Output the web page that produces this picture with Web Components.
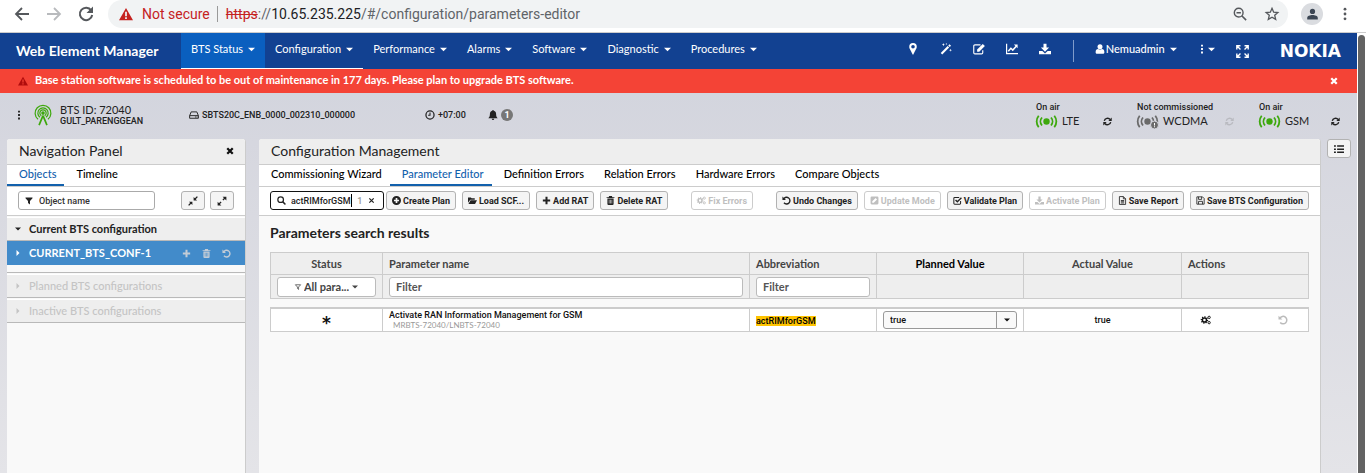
<!DOCTYPE html>
<html lang="en">
<head>
<meta charset="utf-8">
<title>Web Element Manager</title>
<style>
    html, body {
        margin: 0;
        height: 100%;
    }
    body {
        font-family: Lato, Roboto, sans-serif;
        font-size: 11px;
        line-height: 14px;
        color: #222;
        background: #fff;
        --blue: #124191;
        --link: #1261ad;
        --line: #ccc;
        --head: #eee;
        --small: 500 9px/12px Roboto, sans-serif;
    }
</style>
</head>
<body>
<wem-app></wem-app>

<script>
// Base class: opens a shadow root and fills it from the static parts of the class
class WemElement extends HTMLElement {
    constructor() {
        super();
        this.attachShadow({mode: "open"});
        let template = document.createElement('template');
        template.innerHTML = `
            <style>
                * { box-sizing: border-box; }
                button, input, select {
                    font: inherit;
                    color: inherit;
                    background: none;
                    border: 0;
                    padding: 0;
                    margin: 0;
                    outline: 0;
                }
                select { appearance: none; }
                a { color: inherit; text-decoration: none; }
                ${this.constructor.styles}
            </style>
            ${this.constructor.markup}
        `;
        this.shadowRoot.appendChild(template.content.cloneNode(true));
    }
}

const stroke = 'fill="none" stroke="currentColor"';

const icons = {
    'arrow-left': `<path ${stroke} stroke-width="1.8" d="M15 8H2M8 2L2 8l6 6"/>`,
    'arrow-right': `<path ${stroke} stroke-width="1.8" d="M1 8h13M8 2l6 6-6 6"/>`,
    'reload': `<path ${stroke} stroke-width="2" d="M13.2 4.4A6.2 6.2 0 1 0 14.2 9"/><path d="M15 0.5v6.5H8.5z"/>`,
    'warning': `<path fill-rule="evenodd" d="M8 1l8 14H0zM7 5.5v5h2v-5zM7 11.7v2h2v-2z"/>`,
    'zoom-out': `<circle ${stroke} stroke-width="1.6" cx="6.5" cy="6.5" r="5"/><path ${stroke} stroke-width="1.8" d="M10 10l5 5M4 6.5h5"/>`,
    'star': `<path ${stroke} stroke-width="1.5" d="M8 1.5l1.9 4.4 4.8.4-3.6 3.2 1.1 4.7L8 11.7l-4.2 2.5 1.1-4.7L1.3 6.3l4.8-.4z"/>`,
    'person': `<circle cx="8" cy="4.2" r="3.2"/><path d="M1.5 14v-2c0-2.3 3.5-3.5 6.5-3.5s6.5 1.2 6.5 3.5v2z"/>`,
    'dots': `<path d="M6.5 1h3v3h-3zM6.5 6.5h3v3h-3zM6.5 12h3v3h-3z"/>`,
    'round-dots': `<circle cx="8" cy="2.5" r="1.6"/><circle cx="8" cy="8" r="1.6"/><circle cx="8" cy="13.5" r="1.6"/>`,
    'caret-down': `<path d="M0 4h16L8 12z"/>`,
    'caret-right': `<path d="M4 0v16L12 8z"/>`,
    'pin': `<path fill-rule="evenodd" d="M8 0a5 5 0 0 1 5 5c0 2-.7 2.7-5 11C3.7 7.7 3 7 3 5a5 5 0 0 1 5-5zm0 2.6a2.4 2.4 0 1 0 0 4.8 2.4 2.4 0 0 0 0-4.8z"/>`,
    'wand': `<path d="M1 13.2L10.2 4l2 2L3 15.2zM11 3.3l1.7-1.7 2 2L13 5.3zM4.5 0l.6 1.5 1.5.6-1.5.6-.6 1.5-.6-1.5-1.5-.6 1.5-.6zM8.5 0l.4 1 1 .4-1 .4-.4 1-.4-1-1-.4 1-.4zM14 7.5l.5 1.5 1.5.5-1.5.5-.5 1.5-.5-1.5-1.5-.5L13.5 9z"/>`,
    'edit': `<path ${stroke} stroke-width="1.5" d="M13 9.5V13a1.5 1.5 0 0 1-1.5 1.5h-9A1.5 1.5 0 0 1 1 13V4a1.5 1.5 0 0 1 1.5-1.5H10"/><path d="M5.5 11.5V8.7L13 1.2 15.8 4l-7.5 7.5z"/>`,
    'edit-square': `<path fill-rule="evenodd" d="M3 1h10a2 2 0 0 1 2 2v10a2 2 0 0 1-2 2H3a2 2 0 0 1-2-2V3a2 2 0 0 1 2-2zm1 11h2.7L12.5 6 10 3.5 4 9.3z"/>`,
    'chart': `<path d="M0 1h1.6v12.4H16V15H0z"/><path ${stroke} stroke-width="2" d="M3 11l3.5-4L9 9.5 14 4"/><path d="M10.5 2h5v5z"/>`,
    'download': `<path d="M6 1h4v5h3.500L8 11.500 2.500 6H6zM0 10.500h4.500L8 14l3.500-3.500H16V15H0z"/>`,
    'user': `<circle cx="8" cy="4.500" r="4"/><path d="M1 13c0-3.500 1.500-5 4-5 2 1.300 4 1.300 6 0 2.500 0 4 1.500 4 5 0 1.500-1 2.500-2.500 2.500h-9C2 15.500 1 14.500 1 13z"/>`,
    'expand': `<path ${stroke} stroke-width="1.700" d="M1 5.500V1h4.500M10.500 1H15v4.500M15 10.500V15h-4.500M5.500 15H1v-4.500M1 1l4.500 4.500M15 1l-4.500 4.500M15 15l-4.500-4.500M1 15l4.500-4.500"/>`,
    'close': `<path ${stroke} stroke-width="4.500" d="M2.500 2.500l11 11M13.500 2.500l-11 11"/>`,
    'close-thin': `<path ${stroke} stroke-width="2.800" d="M3 3l10 10M13 3L3 13"/>`,
    'antenna': `<circle cx="8" cy="6.300" r="1.600"/><path ${stroke} stroke-width="1.100" d="M3.600 11.800a7 7 0 1 1 8.800 0M5.300 10a4.600 4.600 0 1 1 5.400 0M6.500 8.600a2.800 2.800 0 1 1 3 0"/><path ${stroke} stroke-width="1.500" d="M8 8.500L4.500 17M8 8.500L11.500 17"/>`,
    'disk': `<path ${stroke} stroke-width="1.500" d="M1 9l2.500-6h9L15 9v4.200H1zM1 9h14"/><path d="M9.500 10.500H11V12H9.500zM12 10.500h1.500V12H12z"/>`,
    'clock': `<circle ${stroke} stroke-width="2" cx="8" cy="8" r="6.500"/><path ${stroke} stroke-width="1.700" d="M8 4v4.500H5"/>`,
    'bell': `<path d="M8 0a1.200 1.200 0 0 1 1.200 1.300C12 2 13 4 13 7c0 3 1 4.500 2.500 6H.5C2 11.500 3 10 3 7c0-3 1-5 3.800-5.700A1.200 1.200 0 0 1 8 0zM6 13.800h4a2 2 0 0 1-4 0z"/>`,
    'refresh': `<path ${stroke} stroke-width="2.400" d="M2.300 7A5.900 5.900 0 0 1 12.800 4.500M13.700 9A5.900 5.900 0 0 1 3.200 11.500"/><path d="M15.500 1v6h-6zM.5 15V9h6z"/>`,
    'filter': `<path d="M1 1h14v1.500L10 8v7l-4-3V8L1 2.500z"/>`,
    'filter-line': `<path ${stroke} stroke-width="2" d="M1 2h14L9.500 8v6.500L6.500 12V8z"/>`,
    'compress': `<path d="M9 1.500v5.500h5.500zM7 14.500V9H1.500z"/><path ${stroke} stroke-width="2.200" d="M10.500 5.500L15 1M5.500 10.500L1 15"/>`,
    'enlarge': `<path d="M15 1v6L9 1zM1 15V9l6 6z"/><path ${stroke} stroke-width="2.200" d="M9.500 6.500L13 3M6.500 9.500L3 13"/>`,
    'plus': `<path d="M6.200 1.500h3.600v4.700h4.700v3.600H9.800v4.700H6.200V9.800H1.500V6.200h4.700z"/>`,
    'plus-circle': `<path fill-rule="evenodd" d="M8 0a8 8 0 1 1 0 16A8 8 0 0 1 8 0zM6.500 3.500v3h-3v3h3v3h3v-3h3v-3h-3v-3z"/>`,
    'trash': `<path fill-rule="evenodd" d="M5.500 0h5l.8 2H15v1.500H1V2h3.700zM2.500 4.500h11V14a2 2 0 0 1-2 2h-7a2 2 0 0 1-2-2zM5 6.500v7h1v-7zm2.500 0v7h1v-7zm2.500 0v7h1v-7z"/>`,
    'undo': `<path ${stroke} stroke-width="2.400" d="M3 5A6 6 0 1 1 3.500 12"/><path d="M.8 1v6.200H7z"/>`,
    'search': `<circle ${stroke} stroke-width="2.200" cx="6.500" cy="6.500" r="5"/><path ${stroke} stroke-width="2.600" d="M10 10l5 5"/>`,
    'folder': `<path d="M0 12V2.500h5L6.500 4H12v2.500H4zM4.500 7.500H16L12.500 14H.8z"/>`,
    'gears': `<circle ${stroke} stroke-width="2.400" cx="5.500" cy="8" r="3.300"/><path ${stroke} stroke-width="2" stroke-dasharray="1.900 1.900" d="M5.500 3a5 5 0 1 1 0 10 5 5 0 0 1 0-10z"/><circle ${stroke} stroke-width="1.500" cx="13" cy="3.800" r="1.900"/><circle ${stroke} stroke-width="1.500" cx="13" cy="12.200" r="1.900"/>`,
    'check-square': `<path ${stroke} stroke-width="1.800" d="M13.500 9v4a1.500 1.500 0 0 1-1.500 1.500H3A1.500 1.500 0 0 1 1.500 13V4A1.500 1.500 0 0 1 3 2.500h8"/><path ${stroke} stroke-width="2.400" d="M4.500 7l3.200 3.200L15 3"/>`,
    'document': `<path ${stroke} stroke-width="1.500" d="M2.500 1H9.500l4 4v10h-11zM9.500 1v4h4M5 8h6M5 10.200h6M5 12.400h6"/>`,
    'floppy': `<path ${stroke} stroke-width="1.500" d="M1.500 1.500h10l3 3v10h-13zM4.500 14.500v-5h7v5M4.500 1.500V6H10V1.500"/>`,
    'list': `<path d="M0 2h3v2.400H0zM5 2h11v2.400H5zM0 7h3v2.400H0zM5 7h11v2.400H5zM0 12h3v2.400H0zM5 12h11v2.400H5z"/>`
};

// <wem-icon name="plus"> is one em square and takes the text colour
class WemIcon extends WemElement {
    static styles = `
        :host { display: inline-flex; flex: none; width: 1em; height: 1em; }
        svg { width: 100%; height: 100%; fill: currentColor; overflow: visible; }
    `;
    static markup = `<svg viewBox="0 0 16 16" aria-hidden="true"></svg>`;

    static get observedAttributes() {
        return ['name'];
    }

    attributeChangedCallback() {
        this.shadowRoot.querySelector('svg').innerHTML = icons[this.getAttribute('name')];
    }
}
customElements.define('wem-icon', WemIcon);

// Radio signal: green when on air, grey with a badge when not commissioned
class SignalIcon extends WemElement {
    static styles = `
        :host { display: inline-flex; flex: none; color: #3da80d; }
        :host([off]) { color: #6a6a6a; }
        svg { width: 21px; height: 13px; overflow: visible; }
        .badge { display: none; }
        :host([off]) .badge { display: block; }
    `;
    static markup = `
        <svg viewBox="0 0 21 13" aria-hidden="true">
            <circle cx="10.500" cy="6.500" r="3.200" fill="currentColor"/>
            <path ${stroke} stroke-width="1.800" d="M6 2.500a6 6 0 0 0 0 8M15 2.500a6 6 0 0 1 0 8M2.700.8a9 9 0 0 0 0 11.400M18.300.8a9 9 0 0 1 0 11.400"/>
            <g class="badge">
                <circle cx="17.500" cy="10" r="4" fill="currentColor" stroke="#d6d7df"/>
                <path d="M17 8h1v2.500h-1zM17 11.200h1v1h-1z" fill="#fff"/>
            </g>
        </svg>
    `;
}
customElements.define('signal-icon', SignalIcon);

class BrowserBar extends WemElement {
    static styles = `
        :host {
            display: flex;
            align-items: flex-start;
            height: 33px;
            padding: 0 14px;
            border-bottom: 1px solid #ccc;
            font-family: Roboto, sans-serif;
            font-size: 14px;
            line-height: 28px;
            color: #55585c;
            box-sizing: border-box;
        }
        button { display: flex; align-items: center; height: 28px; margin-right: 16px; font-size: 16px; }
        button[disabled] { color: #b8babd; }
        .address {
            flex: 1;
            display: flex;
            align-items: center;
            height: 28px;
            margin-left: -2px;
            padding: 0 9px 0 11px;
            background: #f1f3f4;
            border-radius: 14px;
        }
        .warn { color: #c5221f; }
        .warn wem-icon { margin-right: 9px; vertical-align: -2px; }
        .sep { width: 1px; height: 16px; margin: 0 8px 0 7px; background: #999; }
        .url { flex: 1; color: #5f6368; }
        .url s { color: #c5221f; }
        .url b { color: #202124; font-weight: 400; }
        .address button { margin: 0 0 0 18px; font-size: 14px; }
        button.avatar { justify-content: center; width: 22px; height: 22px; margin: 3px 15px 0 13px; border-radius: 50%; background: #dadce0; color: #3c4654; font-size: 13px; }
        button.more { margin: 0; font-size: 14px; }
    `;
    static markup = `
        <button aria-label="Back"><wem-icon name="arrow-left"></wem-icon></button>
        <button aria-label="Forward" disabled><wem-icon name="arrow-right"></wem-icon></button>
        <button aria-label="Reload"><wem-icon name="reload"></wem-icon></button>
        <div class="address">
            <span class="warn"><wem-icon name="warning"></wem-icon>Not secure</span>
            <span class="sep"></span>
            <span class="url"><s>https</s>://<b>10.65.235.225</b>/#/configuration/parameters-editor</span>
            <button aria-label="Zoom"><wem-icon name="zoom-out"></wem-icon></button>
            <button aria-label="Bookmark"><wem-icon name="star"></wem-icon></button>
        </div>
        <button class="avatar" aria-label="Profile"><wem-icon name="person"></wem-icon></button>
        <button class="more" aria-label="More"><wem-icon name="round-dots"></wem-icon></button>
    `;
}
customElements.define('browser-bar', BrowserBar);

class NavMenu extends WemElement {
    static styles = `
        :host { display: flex; border-bottom: 1px solid transparent; }
        :host([open]) { border-color: #fff; }
        :host([active]) { background: #0a5fbf; }
        a { display: flex; align-items: center; gap: 5px; padding: 0 10px 3px; }
        wem-icon { font-size: 7px; }
    `;
    static markup = `<a href="#"><slot></slot><wem-icon name="caret-down"></wem-icon></a>`;
}
customElements.define('nav-menu', NavMenu);

class TopNav extends WemElement {
    static styles = `
        :host { display: flex; height: 36px; padding: 0 16px; background: var(--blue); color: #fff; }
        h1 { margin: 0; width: 165px; font-size: 14px; line-height: 36px; font-weight: 700; }
        nav { display: flex; flex: 1; }
        .tools { display: flex; align-items: center; gap: 21px; padding-bottom: 4px; font-size: 12px; }
        .tools a { display: flex; }
        .sep { width: 1px; height: 22px; margin: 0 0 0 22px; background: #7f9bcb; align-self: center; }
        .user { display: flex; align-items: stretch; font-weight: 500; }
        .user .me { margin-left: 11px; }
        .user wem-icon { font-size: 10px; margin-right: -4px; }
        .full { display: flex; align-items: center; margin: 0 31px 0 11px; font-size: 13px; }
        .logo { font: 700 17px/36px "DejaVu Sans", sans-serif; }
    `;
    static markup = `
        <h1>Web Element Manager</h1>
        <nav>
            <nav-menu active open>BTS Status</nav-menu>
            <nav-menu open>Configuration</nav-menu>
            <nav-menu>Performance</nav-menu>
            <nav-menu>Alarms</nav-menu>
            <nav-menu>Software</nav-menu>
            <nav-menu>Diagnostic</nav-menu>
            <nav-menu>Procedures</nav-menu>
        </nav>
        <div class="tools">
            <a href="#" aria-label="Site"><wem-icon name="pin"></wem-icon></a>
            <a href="#" aria-label="Wizard"><wem-icon name="wand"></wem-icon></a>
            <a href="#" aria-label="Edit"><wem-icon name="edit"></wem-icon></a>
            <a href="#" aria-label="Charts"><wem-icon name="chart"></wem-icon></a>
            <a href="#" aria-label="Download"><wem-icon name="download"></wem-icon></a>
        </div>
        <span class="sep"></span>
        <div class="user">
            <nav-menu class="me"><wem-icon name="user"></wem-icon>Nemuadmin</nav-menu>
            <nav-menu aria-label="More"><wem-icon name="dots"></wem-icon></nav-menu>
        </div>
        <a class="full" href="#" aria-label="Full screen"><wem-icon name="expand"></wem-icon></a>
        <span class="logo">NOKIA</span>
    `;
}
customElements.define('top-nav', TopNav);

class AlertBanner extends WemElement {
    static styles = `
        :host { display: flex; align-items: center; gap: 7px; height: 24px; padding: 0 19px 0 18px; background: #f44336; color: #fff; font-weight: 700; }
        wem-icon { font-size: 10px; color: #b00c0c; }
        .text { flex: 1; padding-bottom: 2px; }
        button { display: flex; }
        button wem-icon { font-size: 8px; color: #fff; }
    `;
    static markup = `
        <wem-icon name="warning"></wem-icon>
        <span class="text"><slot></slot></span>
        <button aria-label="Close"><wem-icon name="close"></wem-icon></button>
    `;
}
customElements.define('alert-banner', AlertBanner);

class RadioStatus extends WemElement {
    static styles = `
        :host { display: block; }
        .state { font: var(--small); }
        .row { display: flex; align-items: center; gap: 5px; line-height: 16px; }
        button { display: flex; margin-left: auto; font-size: 9px; }
        button[disabled] { color: #b9bac0; }
    `;
    static markup = `
        <div class="state"></div>
        <div class="row">
            <signal-icon></signal-icon>
            <slot></slot>
            <button aria-label="Refresh"><wem-icon name="refresh"></wem-icon></button>
        </div>
    `;

    connectedCallback() {
        let root = this.shadowRoot;
        root.querySelector('.state').textContent = this.getAttribute('state');
        root.querySelector('signal-icon').toggleAttribute('off', this.hasAttribute('off'));
        root.querySelector('button').disabled = this.hasAttribute('off');
    }
}
customElements.define('radio-status', RadioStatus);

class StatusBar extends WemElement {
    static styles = `
        :host { display: flex; align-items: center; height: 46px; padding: 0 17px 2px 14px; box-sizing: border-box; }
        .bts { display: flex; align-items: center; width: 175px; }
        .bts > wem-icon { font-size: 10px; margin-right: 10px; }
        .bts > wem-icon.ant { font-size: 18px; margin-right: 8px; color: #3da80d; }
        .id { font-size: 11px; line-height: 12px; }
        .name { font: var(--small); line-height: 11px; }
        .item { display: flex; align-items: center; gap: 3px; font: var(--small); }
        .item wem-icon { font-size: 10px; }
        .sw { width: 236px; }
        .time { width: 63px; }
        .count { min-width: 12px; height: 12px; border-radius: 6px; background: #777; color: #fff; font-weight: 700; text-align: center; }
        .radios { display: flex; gap: 25px; margin-left: auto; }
        .narrow { width: 76px; }
        .wide { width: 97px; }
        .mid { width: 81px; }
    `;
    static markup = `
        <div class="bts">
            <wem-icon name="dots"></wem-icon>
            <wem-icon class="ant" name="antenna"></wem-icon>
            <div>
                <div class="id">BTS ID: 72040</div>
                <div class="name">GULT_PARENGGEAN</div>
            </div>
        </div>
        <div class="item sw"><wem-icon name="disk"></wem-icon>SBTS20C_ENB_0000_002310_000000</div>
        <div class="item time"><wem-icon name="clock"></wem-icon>+07:00</div>
        <div class="item"><wem-icon name="bell"></wem-icon><span class="count">1</span></div>
        <div class="radios">
            <radio-status class="narrow" state="On air">LTE</radio-status>
            <radio-status class="wide" state="Not commissioned" off>WCDMA</radio-status>
            <radio-status class="mid" state="On air">GSM</radio-status>
        </div>
    `;
}
customElements.define('status-bar', StatusBar);

// Panel with a grey title strip, a strip of tabs and a strip of tools
class WemPanel extends WemElement {
    static styles = `
        :host { display: flex; flex-direction: column; background: #f9f9f9; border-right: 1px solid var(--line); border-radius: 3px 3px 0 0; }
        header { display: flex; align-items: center; justify-content: space-between; height: 26px; padding: 0 11px 1px 12px; background: var(--head); border-bottom: 1px solid var(--line); border-radius: 3px 3px 0 0; }
        h2 { margin: 0; font-size: 14px; font-weight: 400; }
        .tabs { display: flex; height: 22px; background: #fff; border-bottom: 1px solid var(--line); color: #000; }
        .tools { display: flex; align-items: center; height: 29px; padding: 0 11px 1px; background: #fff; border-bottom: 1px solid var(--line); }
    `;
    static markup = `
        <header><h2><slot name="title"></slot></h2><slot name="close"></slot></header>
        <div class="tabs"><slot name="tabs"></slot></div>
        <div class="tools"><slot name="tools"></slot></div>
        <slot></slot>
    `;
}
customElements.define('wem-panel', WemPanel);

class WemTab extends WemElement {
    static styles = `
        :host { display: flex; padding: 0 8px 0 12px; border-bottom: 2px solid transparent; line-height: 18px; font-weight: 500; }
        :host([selected]) { color: var(--link); border-color: var(--link); }
    `;
    static markup = `<a href="#"><slot></slot></a>`;
}
customElements.define('wem-tab', WemTab);

// Small bordered button, with an icon before its label
class ToolButton extends WemElement {
    static styles = `
        :host { display: inline-flex; flex: none; }
        button {
            display: flex;
            align-items: center;
            justify-content: center;
            gap: 2px;
            height: 19px;
            padding: 0 5px;
            border: 1px solid #b2b2b2;
            border-radius: 3px;
            background: #f4f4f4;
            font: var(--small);
            font-weight: 700;
        }
        button[disabled] { color: #bfbfbf; border-color: #ccc; background: #fff; }
        :host([square]) button { width: 24px; padding: 0; gap: 0; }
        wem-icon { font-size: 9px; }
        :host([square]) wem-icon { font-size: 10px; }
    `;
    static markup = `<button><wem-icon name="plus"></wem-icon><slot></slot></button>`;

    connectedCallback() {
        let button = this.shadowRoot.querySelector('button');
        button.querySelector('wem-icon').setAttribute('name', this.getAttribute('icon'));
        button.disabled = this.hasAttribute('disabled');
        if (this.hasAttribute('label')) {
            button.setAttribute('aria-label', this.getAttribute('label'));
        }
    }
}
customElements.define('tool-button', ToolButton);

class TreeSection extends WemElement {
    static styles = `
        :host { display: flex; align-items: center; gap: 8px; height: 24px; padding: 0 14px 0 8px; margin-top: 1px; background: var(--head); border-top: 1px solid #fff; border-bottom: 1px solid #b9b9b9; box-sizing: border-box; font-weight: 700; }
        :host([selected]) { margin: 0 0 7px; border: 0; background: #428bca; color: #fff; }
        :host([disabled]) { color: #c4c4c4; font-weight: 500; }
        .caret { font-size: 6px; }
        .text { flex: 1; }
    `;
    static markup = `<wem-icon class="caret" name="caret-right"></wem-icon><span class="text"><slot></slot></span><slot name="actions"></slot>`;

    connectedCallback() {
        if (this.hasAttribute('open')) {
            this.shadowRoot.querySelector('.caret').setAttribute('name', 'caret-down');
        }
    }
}
customElements.define('tree-section', TreeSection);

class NavigationPanel extends WemElement {
    static styles = `
        :host { display: flex; }
        wem-panel { flex: 1; }
        button { display: flex; }
        .close { font-size: 8px; color: #111; }
        .search { display: flex; align-items: center; gap: 6px; width: 137px; height: 19px; margin-right: auto; padding: 0 6px; border: 1px solid #aaa; border-radius: 3px; font: var(--small); }
        .search wem-icon { font-size: 8px; }
        .search input { flex: 1; min-width: 0; }
        input::placeholder { color: #333; }
        tool-button { margin-left: 5px; }
        .actions { display: flex; gap: 11px; font-size: 9px; color: #c3ccd6; }
        .end { border-top: 1px solid #b9b9b9; }
    `;
    static markup = `
        <wem-panel>
            <span slot="title">Navigation Panel</span>
            <button slot="close" class="close" aria-label="Close"><wem-icon name="close"></wem-icon></button>
            <wem-tab slot="tabs" selected>Objects</wem-tab>
            <wem-tab slot="tabs">Timeline</wem-tab>
            <label slot="tools" class="search"><wem-icon name="filter"></wem-icon><input type="text" placeholder="Object name" aria-label="Object name"></label>
            <tool-button slot="tools" square icon="compress" label="Collapse all"></tool-button>
            <tool-button slot="tools" square icon="enlarge" label="Expand all"></tool-button>
            <tree-section open>Current BTS configuration</tree-section>
            <tree-section selected>CURRENT_BTS_CONF-1
                <span slot="actions" class="actions">
                    <button aria-label="Add"><wem-icon name="plus"></wem-icon></button>
                    <button aria-label="Delete"><wem-icon name="trash"></wem-icon></button>
                    <button aria-label="Undo"><wem-icon name="undo"></wem-icon></button>
                </span>
            </tree-section>
            <div class="end"></div>
            <tree-section disabled>Planned BTS configurations</tree-section>
            <tree-section disabled>Inactive BTS configurations</tree-section>
        </wem-panel>
    `;
}
customElements.define('navigation-panel', NavigationPanel);

class ParametersTable extends WemElement {
    static styles = `
        :host { display: block; }
        table { width: 100%; table-layout: fixed; border-collapse: collapse; }
        th, td { height: 22px; padding: 0 6px; border: 1px solid var(--line); text-align: left; font-weight: 400; }
        thead th { background: var(--head); color: #444; font-weight: 700; }
        thead .filters th { height: 24px; }
        th.on { color: #000; }
        .mid { text-align: center; }
        tr.gap td { height: 9px; border-left: 0; border-right: 0; }
        tr.row td { height: 24px; background: #fff; border-top-width: 2px; color: #111; }
        input, .pick { width: 100%; height: 20px; padding: 0 6px; border: 1px solid #bbb; border-radius: 3px; background: #fff; }
        th input { display: block; }
        input::placeholder { color: #555; }
        .pick { display: flex; align-items: center; justify-content: center; gap: 3px; }
        .pick select { field-sizing: content; }
        .pick wem-icon { font-size: 6px; }
        .value { display: flex; height: 18px; border: 1px solid #999; border-radius: 3px; background: #f9f9f9; width: 134px; }
        .value select { flex: 1; padding: 0 6px; }
        .value span { display: flex; align-items: center; justify-content: center; width: 20px; border-left: 1px solid #999; }
        .value wem-icon { font-size: 6px; }
        .name { font: var(--small); line-height: 11px; }
        .path { padding-left: 4px; font-size: 8px; line-height: 8px; color: #999; }
        .value, mark, tr.row td.small { font: var(--small); }
        mark { background: #ffc400; }
        .star { font: 700 17px/8px "DejaVu Sans", sans-serif; vertical-align: -5px; }
        .actions { display: flex; justify-content: space-between; padding: 0 14px 0 13px; font-size: 10px; }
        .actions button { display: flex; }
        .actions button[disabled] { color: #bbb; }
    `;
    static markup = `
        <table>
            <colgroup><col style="width:112px"><col><col style="width:127px"><col style="width:147px"><col style="width:158px"><col style="width:127px"></colgroup>
            <thead>
                <tr>
                    <th class="mid">Status</th><th>Parameter name</th><th>Abbreviation</th>
                    <th class="mid on">Planned Value</th><th class="mid">Actual Value</th><th>Actions</th>
                </tr>
                <tr class="filters">
                    <th><label class="pick"><wem-icon name="filter-line"></wem-icon><select aria-label="Status filter"><option>All para...</option></select><wem-icon name="caret-down"></wem-icon></label></th>
                    <th><input type="text" placeholder="Filter" aria-label="Filter by parameter name"></th>
                    <th><input type="text" placeholder="Filter" aria-label="Filter by abbreviation"></th>
                    <th></th><th></th><th></th>
                </tr>
            </thead>
            <tbody>
                <tr class="gap"><td colspan="6"></td></tr>
                <tr class="row">
                    <td class="mid"><span class="star">*</span></td>
                    <td><div class="name">Activate RAN Information Management for GSM</div><div class="path">MRBTS-72040/LNBTS-72040</div></td>
                    <td><mark>actRIMforGSM</mark></td>
                    <td><label class="value"><select aria-label="Planned value"><option>true</option><option>false</option></select><span><wem-icon name="caret-down"></wem-icon></span></label></td>
                    <td class="mid small">true</td>
                    <td><div class="actions"><button aria-label="Settings"><wem-icon name="gears"></wem-icon></button><button aria-label="Undo" disabled><wem-icon name="undo"></wem-icon></button></div></td>
                </tr>
            </tbody>
        </table>
    `;
}
customElements.define('parameters-table', ParametersTable);

class ConfigurationPanel extends WemElement {
    static styles = `
        :host { display: flex; min-width: 0; }
        wem-panel { flex: 1; min-width: 0; }
        .search { display: flex; flex: none; align-items: center; width: 114px; height: 19px; margin-right: 2px; padding: 0 8px 0 6px; border: 1px solid #111; border-radius: 3px; font: var(--small); }
        .search input { field-sizing: content; height: 13px; margin-left: 5px; border-right: 1px solid #000; }
        .search .hits { flex: 1; color: #999; text-align: center; }
        .search button { display: flex; }
        .search wem-icon { font-size: 9px; }
        .search button wem-icon { font-size: 7px; }
        .group { display: flex; gap: 6px; }
        .fix { margin: 0 auto; }
        .body { padding: 9px 11px; }
        h3 { margin: 0 0 11px; font-size: 14px; line-height: 16px; font-weight: 700; }
    `;
    static markup = `
        <wem-panel>
            <span slot="title">Configuration Management</span>
            <wem-tab slot="tabs">Commissioning Wizard</wem-tab>
            <wem-tab slot="tabs" selected>Parameter Editor</wem-tab>
            <wem-tab slot="tabs">Definition Errors</wem-tab>
            <wem-tab slot="tabs">Relation Errors</wem-tab>
            <wem-tab slot="tabs">Hardware Errors</wem-tab>
            <wem-tab slot="tabs">Compare Objects</wem-tab>
            <label slot="tools" class="search"><wem-icon name="search"></wem-icon><input type="text" value="actRIMforGSM" aria-label="Search parameters"><span class="hits">1</span><button aria-label="Clear"><wem-icon name="close-thin"></wem-icon></button></label>
            <div slot="tools" class="group">
                <tool-button icon="plus-circle">Create Plan</tool-button>
                <tool-button icon="folder">Load SCF...</tool-button>
                <tool-button icon="plus">Add RAT</tool-button>
                <tool-button icon="trash">Delete RAT</tool-button>
            </div>
            <tool-button slot="tools" class="fix" icon="gears" disabled>Fix Errors</tool-button>
            <div slot="tools" class="group">
                <tool-button icon="undo">Undo Changes</tool-button>
                <tool-button icon="edit-square" disabled>Update Mode</tool-button>
                <tool-button icon="check-square">Validate Plan</tool-button>
                <tool-button icon="download" disabled>Activate Plan</tool-button>
                <tool-button icon="document">Save Report</tool-button>
                <tool-button icon="floppy">Save BTS Configuration</tool-button>
            </div>
            <div class="body">
                <h3>Parameters search results</h3>
                <parameters-table></parameters-table>
            </div>
        </wem-panel>
    `;
}
customElements.define('configuration-panel', ConfigurationPanel);

class WemApp extends WemElement {
    static styles = `
        :host { display: flex; flex-direction: column; min-height: 100%; }
        .view { display: flex; flex: 1; }
        .page { display: flex; flex: 1; flex-direction: column; min-width: 0; background: linear-gradient(#d3d5de 60px, #d6d7df 110px, #e4e4e8); }
        .scroll { width: 7px; margin: 2px 1px 0; border-radius: 4px 4px 0 0; background: #636363; }
        main { display: flex; flex: 1; padding: 0 6px 0 7px; }
        navigation-panel { flex: none; width: 239px; margin-right: 13px; }
        configuration-panel { flex: 1; margin-right: 6px; }
    `;
    static markup = `
        <browser-bar></browser-bar>
        <div class="view">
            <div class="page">
                <top-nav></top-nav>
                <alert-banner>Base station software is scheduled to be out of maintenance in 177 days. Please plan to upgrade BTS software.</alert-banner>
                <status-bar></status-bar>
                <main>
                    <navigation-panel></navigation-panel>
                    <configuration-panel></configuration-panel>
                    <tool-button square icon="list" label="Show list"></tool-button>
                </main>
            </div>
            <div class="scroll"></div>
        </div>
    `;
}
customElements.define('wem-app', WemApp);
</script>
</body>
</html>
